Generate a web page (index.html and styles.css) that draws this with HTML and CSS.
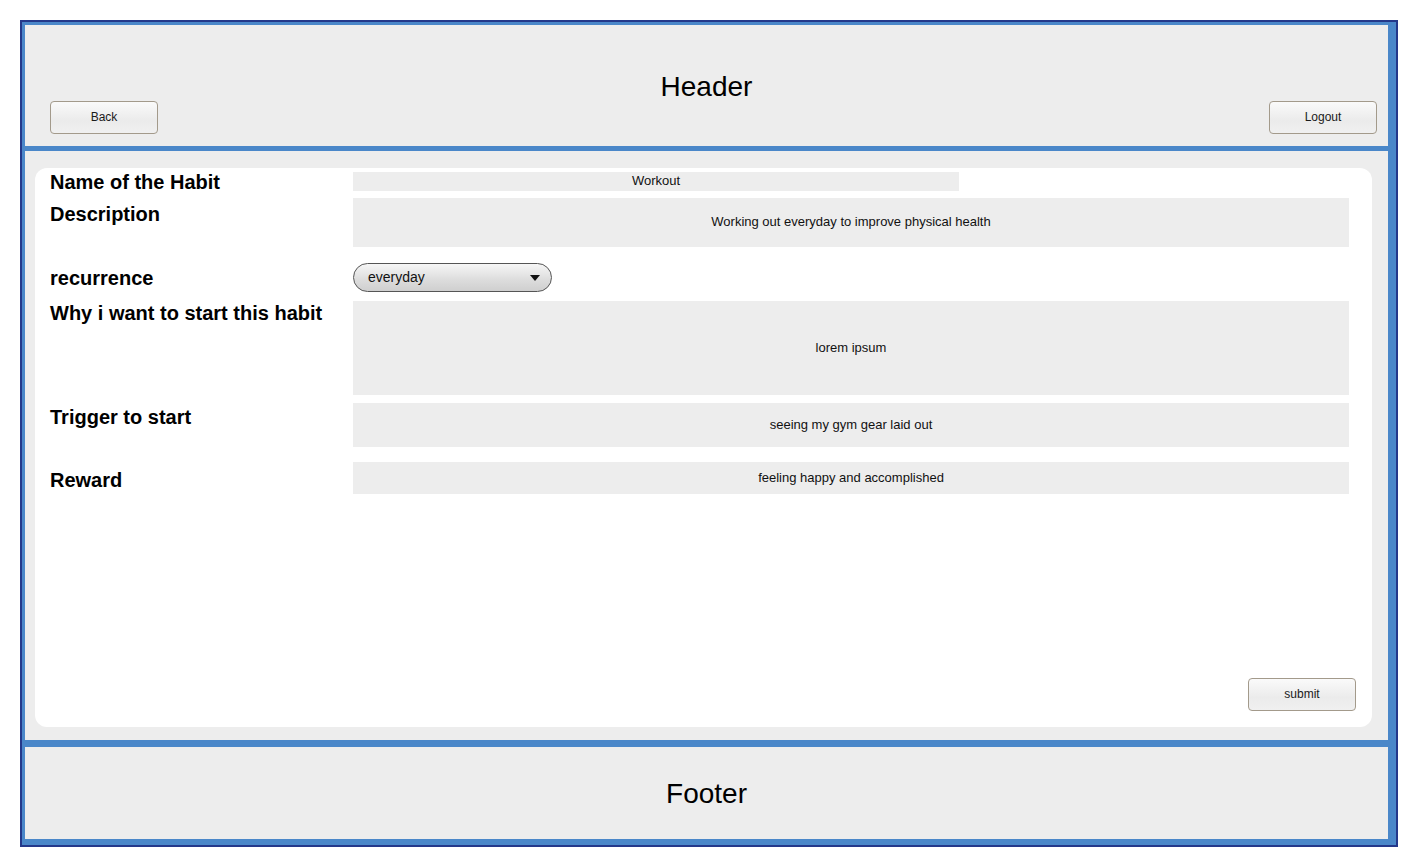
FILE: index.html
```html
<!DOCTYPE html>
<html>
<head>
<meta charset="utf-8">
<link rel="stylesheet" href="styles.css">
</head>
<body>
<div class="frame">
  <header class="header">
    <h1 class="title">Header</h1>
    <div class="header-bar">
      <button class="btn">Back</button>
      <button class="btn">Logout</button>
    </div>
  </header>
  <div class="sep sep-top"></div>
  <main class="main">
    <div class="card">
      <div class="form">
        <div class="row r1">
          <div class="label">Name of the Habit</div>
          <div class="field f-name">Workout</div>
        </div>
        <div class="row r2">
          <div class="label">Description</div>
          <div class="field f-desc">Working out everyday to improve physical health</div>
        </div>
        <div class="row r3">
          <div class="label">recurrence</div>
          <div class="select">
            <span>everyday</span>
            <span class="arrow"></span>
          </div>
        </div>
        <div class="row r4">
          <div class="label">Why i want to start this habit</div>
          <div class="field f-why">lorem ipsum</div>
        </div>
        <div class="row r5">
          <div class="label">Trigger to start</div>
          <div class="field f-trigger">seeing my gym gear laid out</div>
        </div>
        <div class="row r6">
          <div class="label">Reward</div>
          <div class="field f-reward">feeling happy and accomplished</div>
        </div>
      </div>
      <div class="actions">
        <button class="btn">submit</button>
      </div>
    </div>
  </main>
  <div class="sep sep-bottom"></div>
  <footer class="footer">
    <div class="title">Footer</div>
  </footer>
</div>
</body>
</html>
```

FILE: styles.css
```css
* { box-sizing: border-box; }
html, body { margin: 0; padding: 0; background: #fff; }
body {
  font-family: "Liberation Sans", Arial, sans-serif;
  color: #000;
  width: 1418px;
  height: 867px;
  padding: 20px 0 0 20px;
}
.frame {
  width: 1378px;
  height: 827px;
  border: 2px solid #24388a;
  background: #4a87c9;
  padding: 3px 8px 6px 3px;
  display: flex;
  flex-direction: column;
}
.header {
  height: 121px;
  background: #ededed;
  display: flex;
  flex-direction: column;
  padding: 0 11px 12px 25px;
}
.title {
  margin: 0;
  font-weight: normal;
  font-size: 28px;
  line-height: 32px;
  text-align: center;
}
.header .title {
  margin-top: 46px;
  margin-left: -25px;
  margin-right: -11px;
  margin-bottom: -9px;
}
.header-bar {
  display: flex;
  justify-content: space-between;
  margin-top: auto;
}
.btn {
  width: 108px;
  height: 33px;
  border: 1px solid #a39a8b;
  border-radius: 4px;
  background: linear-gradient(#fafafa, #ebebeb 60%, #f0f0f0);
  font-family: "Liberation Sans", Arial, sans-serif;
  font-size: 12px;
  line-height: 14px;
  color: #1a1a1a;
  padding: 0 0 2px 0;
}
.sep { background: #4a87c9; }
.sep-top { height: 5px; }
.sep-bottom { height: 7px; }
.main {
  height: 589px;
  background: #ededed;
  padding: 17px 16px 13px 10px;
}
.card {
  height: 100%;
  background: #fff;
  border-radius: 12px;
  display: flex;
  flex-direction: column;
  padding: 4px 23px 16px 15px;
}
.form { display: flex; flex-direction: column; }
.row { display: flex; align-items: flex-start; }
.label {
  width: 303px;
  flex: none;
  font-weight: bold;
  font-size: 20px;
  line-height: 20px;
  white-space: nowrap;
}
.field {
  flex: 1;
  background: #ededed;
  font-size: 13px;
  color: #111;
  display: flex;
  align-items: center;
  justify-content: center;
  padding-bottom: 2px;
}
.r1 .field { height: 19px; flex: none; width: 606px; }
.r2 { margin-top: 6px; }
.r2 .field { height: 49px; }
.r2 .label { margin-top: 6px; }
.r3 { margin-top: 16px; }
.r3 .label { margin-top: 5px; }
.r4 { margin-top: 9px; }
.r4 .field { height: 94px; }
.r4 .label { margin-top: 2px; }
.r5 { margin-top: 8px; }
.r5 .field { height: 44px; }
.r5 .label { margin-top: 4px; }
.r6 { margin-top: 15px; }
.r6 .field { height: 32px; }
.r6 .label { margin-top: 8px; }
.select {
  width: 199px;
  height: 29px;
  border: 1px solid #555;
  border-radius: 15px;
  background: linear-gradient(#f6f6f6, #dcdcdc 60%, #cfcfcf);
  display: flex;
  align-items: center;
  justify-content: space-between;
  padding: 0 11px 2px 14px;
  font-size: 14px;
  color: #111;
}
.arrow {
  width: 0;
  height: 0;
  border-left: 5px solid transparent;
  border-right: 5px solid transparent;
  border-top: 6px solid #111;
  margin-top: 2px;
}
.actions {
  margin-top: auto;
  display: flex;
  justify-content: flex-end;
  margin-right: -7px;
}
.footer {
  flex: 1;
  background: #ededed;
  display: flex;
  align-items: center;
  justify-content: center;
  padding-top: 2px;
}
```
